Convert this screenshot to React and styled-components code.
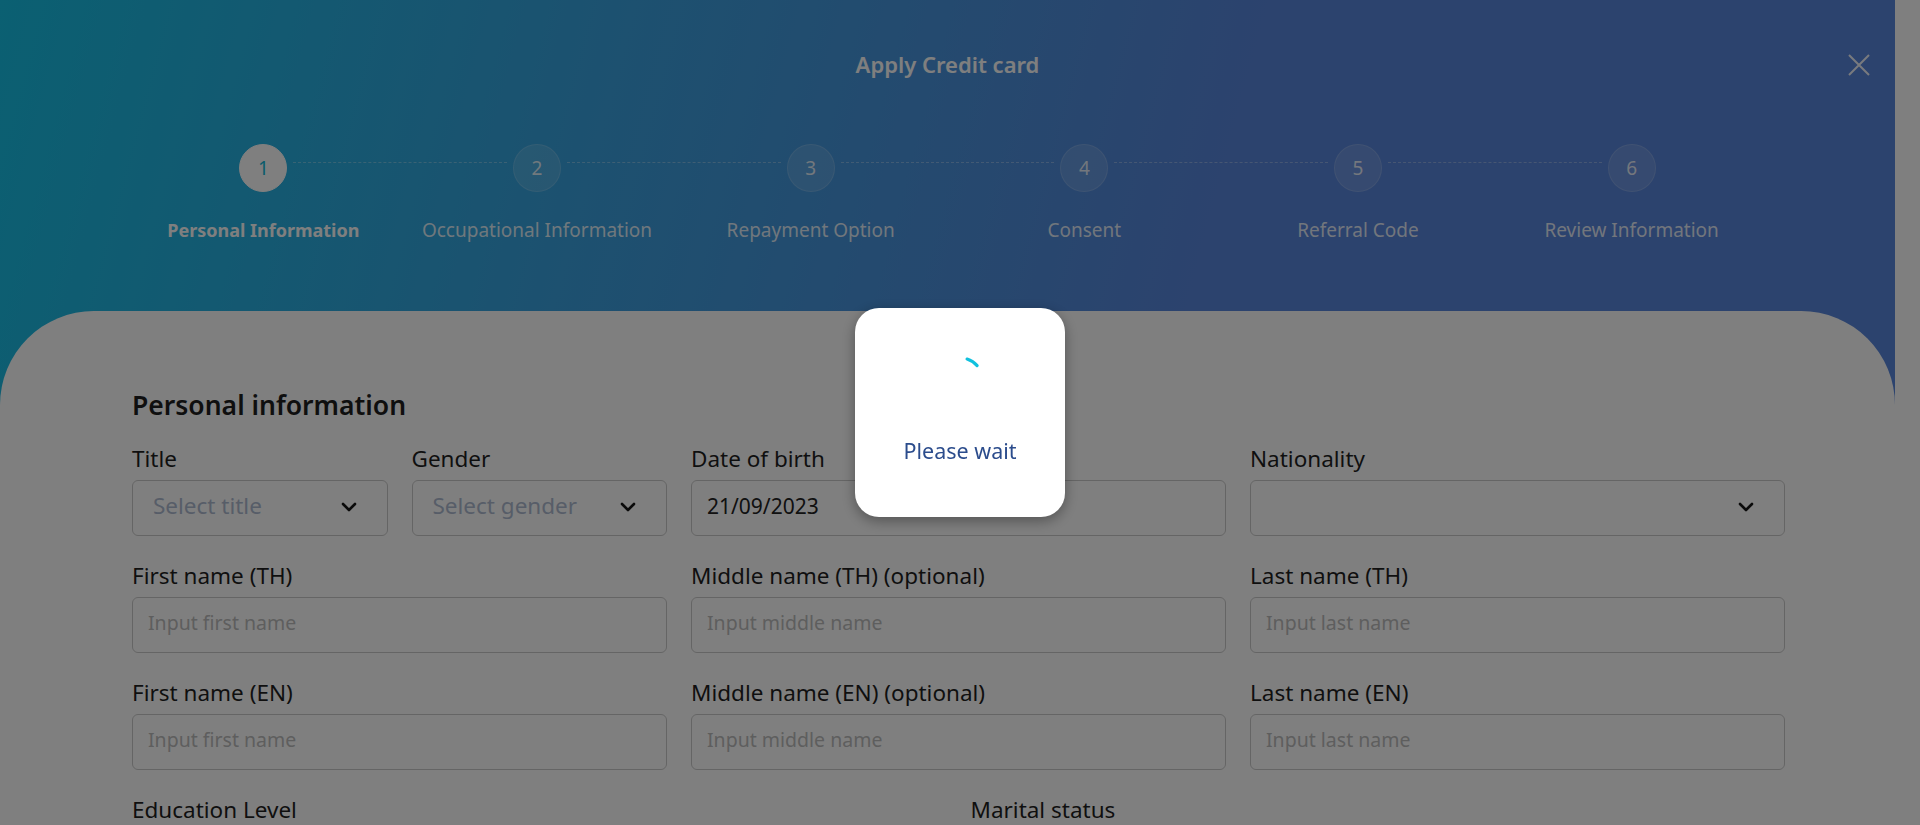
import React from 'react'
import styled, { createGlobalStyle } from 'styled-components'

const steps = [
  'Personal Information',
  'Occupational Information',
  'Repayment Option',
  'Consent',
  'Referral Code',
  'Review Information',
]

function Chevron() {
  return (
    <svg width="16" height="10" viewBox="0 0 16 10" fill="none">
      <path d="M2 2 L8 8 L14 2" stroke="#141414" strokeWidth="2.6" strokeLinecap="round" strokeLinejoin="round" />
    </svg>
  )
}

function App() {
  return (
    <>
      <GlobalStyle />
      <Page>
        <Main>
          <TopBar>
            <Title>Apply Credit card</Title>
            <CloseButton aria-label="close">
              <svg width="24" height="24" viewBox="0 0 24 24" fill="none">
                <path d="M2 2 L22 22 M22 2 L2 22" stroke="rgba(255,255,255,0.92)" strokeWidth="2" />
              </svg>
            </CloseButton>
          </TopBar>

          <Stepper>
            {steps.map((s, i) => (
              <Step key={s} last={i === steps.length - 1}>
                <Circle active={i === 0}>{i + 1}</Circle>
                <StepLabel active={i === 0}>{s}</StepLabel>
              </Step>
            ))}
          </Stepper>

          <Card>
            <Heading>Personal information</Heading>
            <FormGrid>
              <Field span={1}>
                <Label>Title</Label>
                <SelectBox>
                  <Placeholder>Select title</Placeholder>
                  <Chevron />
                </SelectBox>
              </Field>
              <Field span={1}>
                <Label>Gender</Label>
                <SelectBox>
                  <Placeholder>Select gender</Placeholder>
                  <Chevron />
                </SelectBox>
              </Field>
              <Field span={2}>
                <Label>Date of birth</Label>
                <InputBox>
                  <Value>21/09/2023</Value>
                </InputBox>
              </Field>
              <Field span={2}>
                <Label>Nationality</Label>
                <SelectBox>
                  <Placeholder></Placeholder>
                  <Chevron />
                </SelectBox>
              </Field>

              <Field span={2}>
                <Label>First name (TH)</Label>
                <InputBox><Hint>Input first name</Hint></InputBox>
              </Field>
              <Field span={2}>
                <Label>Middle name (TH) (optional)</Label>
                <InputBox><Hint>Input middle name</Hint></InputBox>
              </Field>
              <Field span={2}>
                <Label>Last name (TH)</Label>
                <InputBox><Hint>Input last name</Hint></InputBox>
              </Field>

              <Field span={2}>
                <Label>First name (EN)</Label>
                <InputBox><Hint>Input first name</Hint></InputBox>
              </Field>
              <Field span={2}>
                <Label>Middle name (EN) (optional)</Label>
                <InputBox><Hint>Input middle name</Hint></InputBox>
              </Field>
              <Field span={2}>
                <Label>Last name (EN)</Label>
                <InputBox><Hint>Input last name</Hint></InputBox>
              </Field>

              <Field span={3}>
                <Label>Education Level</Label>
                <SelectBox>
                  <Placeholder></Placeholder>
                  <Chevron />
                </SelectBox>
              </Field>
              <Field span={3}>
                <Label>Marital status</Label>
                <SelectBox>
                  <Placeholder></Placeholder>
                  <Chevron />
                </SelectBox>
              </Field>
            </FormGrid>
          </Card>
        </Main>
        <Gutter />
      </Page>

      <Overlay />
      <LoadingBox>
        <svg width="56" height="56" viewBox="0 0 56 56" fill="none">
          <path d="M35.1 6.1 A23 23 0 0 1 45.1 12.6" stroke="#10c1de" strokeWidth="3.2" strokeLinecap="round" />
        </svg>
        <WaitText>Please wait</WaitText>
      </LoadingBox>
    </>
  )
}

export default App

const GlobalStyle = createGlobalStyle`
  html, body {
    margin: 0;
    padding: 0;
    overflow: hidden;
  }
  body {
    font-family: "Noto Sans", "Open Sans", sans-serif;
    background: #ffffff;
  }
  * { box-sizing: border-box; }
`

const Page = styled.div`
  display: flex;
  width: 1920px;
  height: 825px;
  overflow: hidden;
`

const Main = styled.div`
  width: 1895px;
  flex-shrink: 0;
  background: linear-gradient(105deg, #16c0e4 0%, #3aa2e0 30%, #5886dc 60%, #5886dc 100%);
`

const Gutter = styled.div`
  flex: 1;
  background: #ffffff;
`

const TopBar = styled.div`
  display: grid;
  grid-template-columns: 1fr auto 1fr;
  align-items: center;
  height: 130px;
`

const Title = styled.h2`
  grid-column: 2;
  margin: 0 0 2px;
  font-size: 22px;
  line-height: 28px;
  font-weight: 600;
  color: #ffffff;
`

const CloseButton = styled.div`
  grid-column: 3;
  justify-self: end;
  margin-right: 24px;
  display: flex;
`

const Stepper = styled.div`
  display: grid;
  grid-template-columns: repeat(6, 1fr);
  width: 1642px;
  margin: 14px auto 0;
`

const Step = styled.div`
  position: relative;
  display: flex;
  flex-direction: column;
  align-items: center;
  &::after {
    content: '';
    display: ${(p) => (p.last ? 'none' : 'block')};
    position: absolute;
    top: 18px;
    left: calc(50% + 30px);
    right: calc(-50% + 30px);
    border-top: 1px dashed rgba(255, 255, 255, 0.32);
  }
`

const Circle = styled.div`
  width: 48px;
  height: 48px;
  border-radius: 50%;
  display: flex;
  align-items: center;
  justify-content: center;
  font-size: 19px;
  background: ${(p) => (p.active ? '#ffffff' : 'rgba(255,255,255,0.12)')};
  border: 1px solid ${(p) => (p.active ? '#ffffff' : 'rgba(255,255,255,0.14)')};
  color: ${(p) => (p.active ? '#14b7d6' : 'rgba(255,255,255,0.85)')};
`

const StepLabel = styled.div`
  margin-top: 26px;
  font-size: ${(p) => (p.active ? '18px' : '19px')};
  line-height: 24px;
  font-weight: ${(p) => (p.active ? 700 : 400)};
  color: ${(p) => (p.active ? '#ffffff' : 'rgba(255,255,255,0.85)')};
  white-space: nowrap;
`

const Card = styled.div`
  margin-top: 69px;
  background: #ffffff;
  border-radius: 94px 94px 0 0;
  padding: 78px 110px 0 132px;
  height: 600px;
`

const Heading = styled.h3`
  margin: 0 0 24px;
  font-size: 26.5px;
  line-height: 32px;
  font-weight: 600;
  color: #1e1e1e;
`

const FormGrid = styled.div`
  display: grid;
  grid-template-columns: repeat(6, 1fr);
  column-gap: 24px;
  row-gap: 26px;
`

const Field = styled.div`
  grid-column: span ${(p) => p.span};
  display: flex;
  flex-direction: column;
`

const Label = styled.label`
  font-size: 22.5px;
  line-height: 28px;
  color: #1f1f1f;
  margin-bottom: 7px;
  white-space: nowrap;
`

const InputBox = styled.div`
  height: 56px;
  border: 1px solid #cbcbcb;
  border-radius: 6px;
  display: flex;
  align-items: center;
  padding: 0 15px 5px;
`

const SelectBox = styled(InputBox)`
  justify-content: space-between;
  padding: 0 30px 3px 20px;
`

const Placeholder = styled.span`
  font-size: 22.5px;
  color: #aebbd1;
  margin-bottom: 2px;
`

const Hint = styled.span`
  font-size: 19.5px;
  color: #bdbdbd;
`

const Value = styled.span`
  font-size: 21px;
  color: #222222;
`

const Overlay = styled.div`
  position: fixed;
  inset: 0;
  background: rgba(0, 0, 0, 0.5);
`

const LoadingBox = styled.div`
  position: fixed;
  left: 855px;
  top: 308px;
  width: 210px;
  height: 209px;
  background: #ffffff;
  border-radius: 24px;
  box-shadow: 0 4px 14px rgba(0, 0, 0, 0.35);
  display: flex;
  flex-direction: column;
  align-items: center;
  padding-top: 45px;
`

const WaitText = styled.div`
  margin-top: 28px;
  font-size: 21.5px;
  line-height: 28px;
  color: #2b4c8c;
`
